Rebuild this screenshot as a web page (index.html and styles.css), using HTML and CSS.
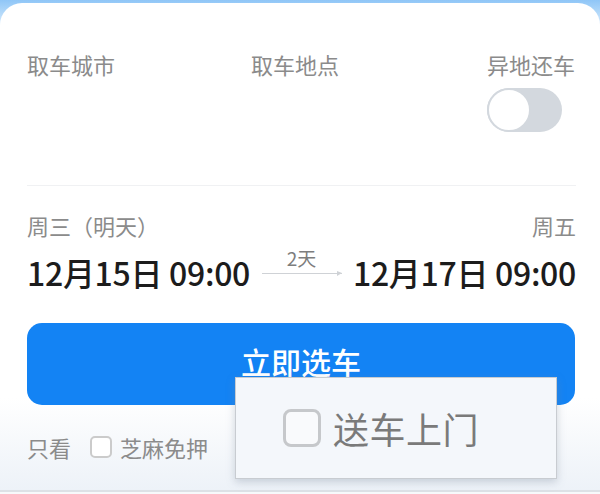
FILE: index.html
```html
<!DOCTYPE html>
<html lang="zh">
<head>
<meta charset="utf-8">
<link rel="stylesheet" href="styles.css">
</head>
<body>
<div class="card">
  <div class="loc-row">
    <div class="label">取车城市</div>
    <div class="label">取车地点</div>
    <div class="col-right">
      <div class="label">异地还车</div>
      <div class="toggle"><span class="knob"></span></div>
    </div>
  </div>
  <div class="divider"></div>
  <div class="week-row">
    <span class="label">周三（明天）</span>
    <span class="label">周五</span>
  </div>
  <div class="date-row">
    <span class="date">12月15日 09:00</span>
    <div class="duration">
      <span class="days">2天</span>
      <span class="arrow"></span>
    </div>
    <span class="date">12月17日 09:00</span>
  </div>
  <button class="select-btn">立即选车</button>
  <div class="filter-row">
    <span class="label small">只看</span>
    <span class="check small-check"></span>
    <span class="label small">芝麻免押</span>
  </div>
  <div class="popup">
    <span class="check big-check"></span>
    <span class="popup-text">送车上门</span>
  </div>
</div>
</body>
</html>
```
FILE: styles.css
```css
html, body {
  margin: 0;
  padding: 0;
}
body {
  width: 600px;
  height: 494px;
  overflow: hidden;
  background: linear-gradient(to bottom, #8fc6f7 0, #c7e3fb 20px, #f7f9fb 60px, #f7f9fb 100%);
  font-family: "Noto Sans CJK SC", "Noto Sans", sans-serif;
}
.card {
  position: relative;
  box-sizing: border-box;
  margin: 3px 0 0 0;
  height: 489px;
  border-radius: 22px 22px 0 0;
  background: linear-gradient(to bottom, #ffffff 0, #ffffff 395px, #edf2f8 487px);
  padding: 0 24px 0 27px;
  border-bottom: 2px solid #dde1e6;
}
.label {
  font-size: 22px;
  line-height: 28px;
  color: #8b8b8b;
}
.loc-row {
  display: grid;
  grid-template-columns: 224px 1fr auto;
  padding-top: 47px;
}
.col-right {
  display: flex;
  flex-direction: column;
  align-items: flex-start;
  gap: 10px;
  margin-right: 1px;
}
.toggle {
  width: 75px;
  height: 44px;
  border-radius: 22px;
  background: #d3d8de;
  box-sizing: border-box;
  position: relative;
}
.knob {
  position: absolute;
  left: 0;
  top: 0;
  width: 44px;
  height: 44px;
  border-radius: 50%;
  background: #fff;
  box-sizing: border-box;
  border: 2px solid #d3d8de;
}
.divider {
  margin-top: 53px;
  height: 1px;
  background: #f0f1f3;
}
.week-row {
  display: flex;
  justify-content: space-between;
  margin-top: 25px;
}
.date-row {
  display: flex;
  justify-content: space-between;
  align-items: flex-end;
  margin-top: 8px;
}
.date {
  font-size: 32px;
  line-height: 38px;
  font-weight: 500;
  color: #1c1c1c;
  letter-spacing: -0.3px;
}
.duration {
  display: flex;
  flex-direction: column;
  align-items: center;
  width: 80px;
  padding-bottom: 17px;
}
.days {
  font-size: 19px;
  line-height: 22px;
  color: #7d7d7d;
}
.arrow {
  position: relative;
  display: block;
  width: 80px;
  height: 1px;
  margin-top: 4px;
  background: #cfd2d6;
}
.arrow::after {
  content: "";
  position: absolute;
  right: 0;
  top: -2px;
  border-left: 5px solid #cfd2d6;
  border-top: 2px solid transparent;
  border-bottom: 3px solid transparent;
}
.select-btn {
  display: block;
  width: 548px;
  height: 82px;
  margin-top: 32px;
  border: none;
  border-radius: 15px;
  background: #1383f4;
  color: #fff;
  font-family: inherit;
  font-size: 30px;
  font-weight: 500;
  padding: 0 0 6px 0;
}
.filter-row {
  display: flex;
  align-items: center;
  margin-top: 28px;
}
.check {
  display: inline-block;
  box-sizing: border-box;
  background: #fff;
}
.small-check {
  width: 22px;
  height: 22px;
  border: 2px solid #cbcbcb;
  border-radius: 5px;
  margin: 0 8px 0 19px;
}
.popup {
  position: absolute;
  left: 235px;
  top: 374px;
  width: 322px;
  height: 102px;
  box-sizing: border-box;
  background: #f4f7fb;
  border: 1px solid #c8ccd1;
  box-shadow: 0 3px 8px rgba(120, 135, 155, 0.35);
  display: flex;
  align-items: center;
  padding-left: 47px;
  gap: 12px;
}
.big-check {
  width: 38px;
  height: 38px;
  border: 3px solid #c6c8cb;
  border-radius: 8px;
  background: #f9fafc;
}
.popup-text {
  font-size: 36px;
  line-height: 44px;
  color: #7a7a7a;
  letter-spacing: 0.5px;
}
```
